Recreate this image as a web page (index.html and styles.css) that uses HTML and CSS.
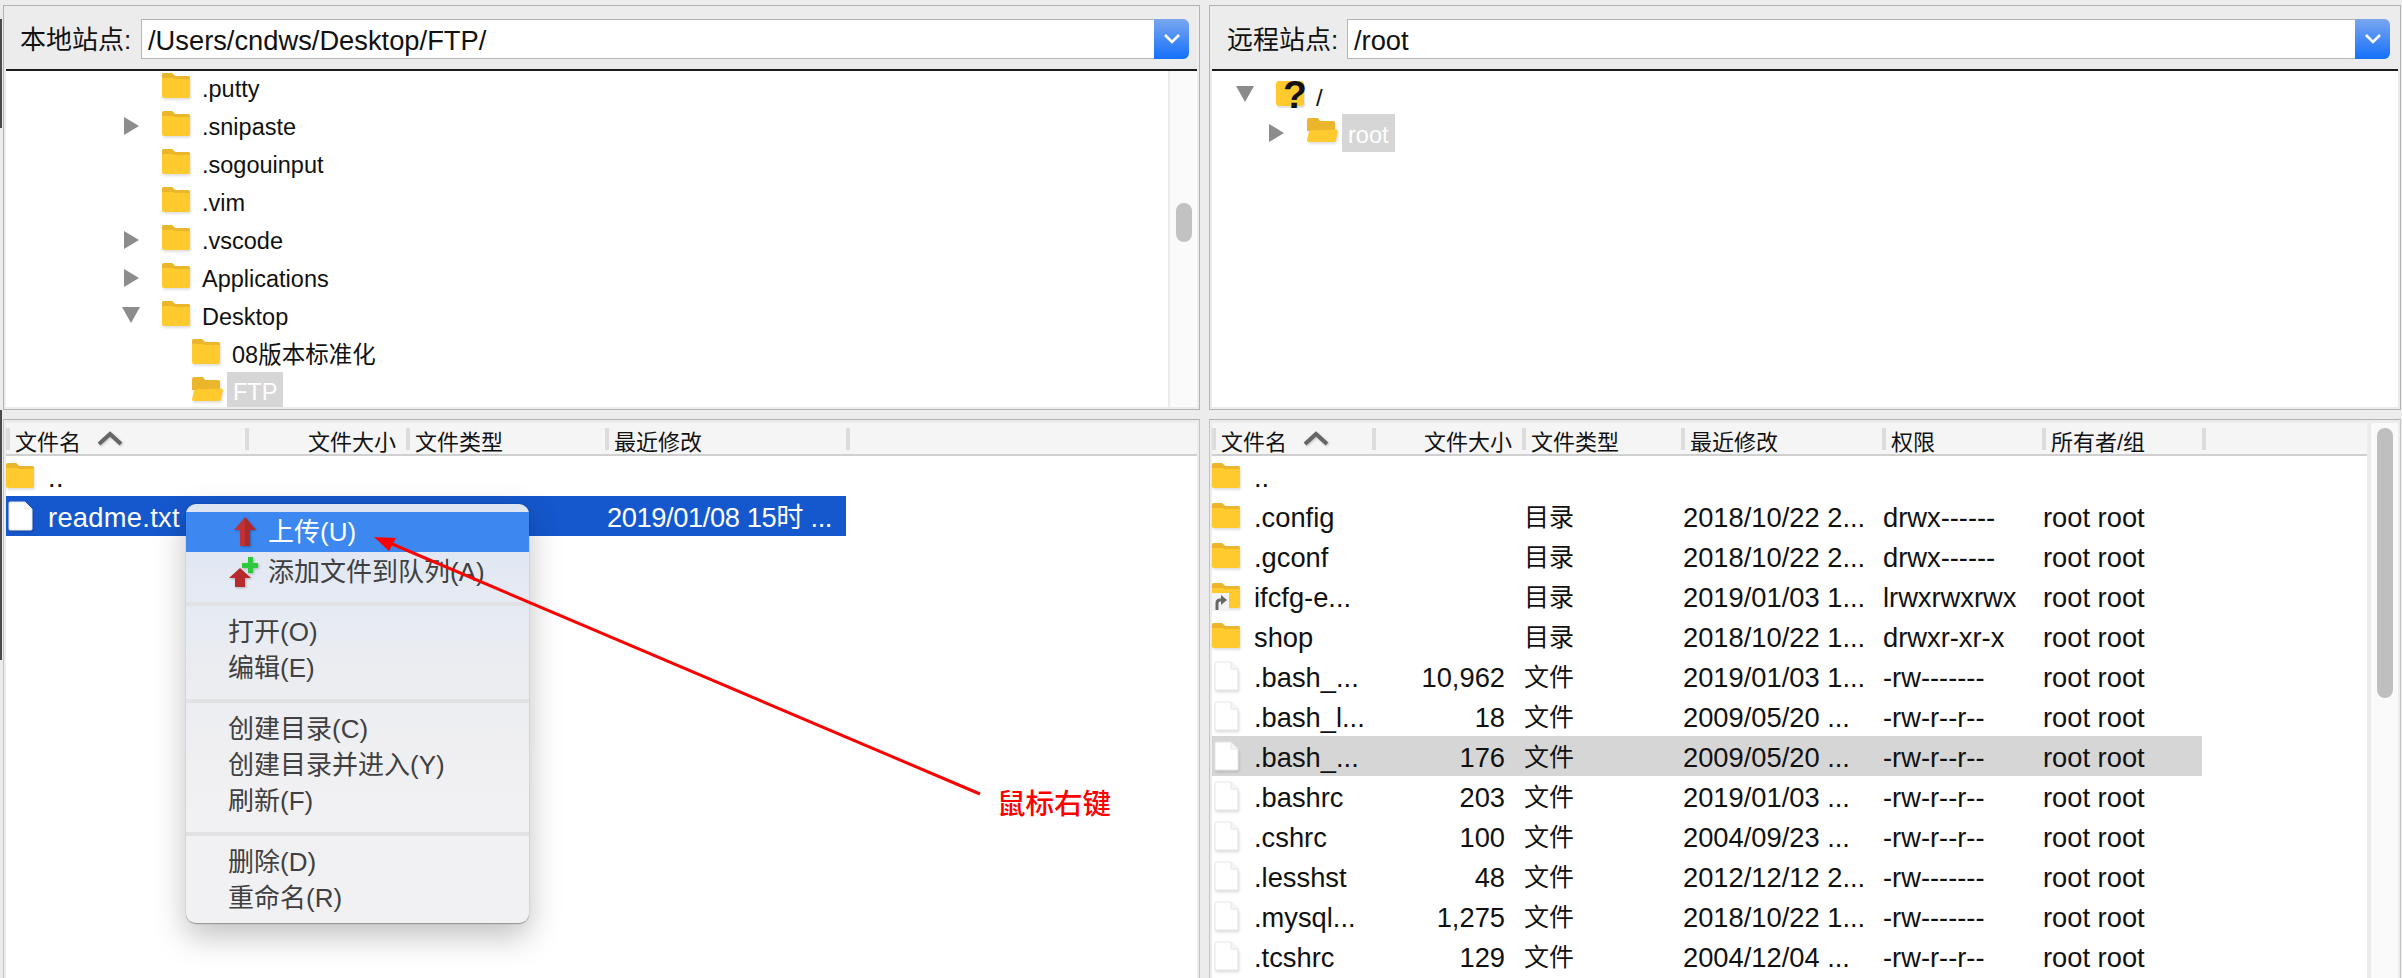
FILE: index.html
```html
<!DOCTYPE html>
<html lang="zh">
<head>
    <meta charset="UTF-8">
    <title>FTP</title>
    <link rel="stylesheet" href="styles.css">
</head>
<body>
    <svg class="icon-defs" width="0" height="0">
        <symbol id="folder" viewBox="0 0 28 25">
            <path d="M0 2a2 2 0 0 1 2-2h8l3 3h13a2 2 0 0 1 2 2v18a2 2 0 0 1-2 2H2a2 2 0 0 1-2-2z" fill="#ffca2e"/>
            <path d="M0 2a2 2 0 0 1 2-2h8l3 3h13a2 2 0 0 1 2 2v1H13l-2-1H0z" fill="#ebb52c"/>
        </symbol>
        <symbol id="folder-open" viewBox="0 0 31 25">
            <path d="M0 2a2 2 0 0 1 2-2h9l2 3h13a2 2 0 0 1 2 2v8H0z" fill="#ebb52c"/>
            <path d="M2 14q.2-1.500 2-1.500l25-1q2 0 2 1.500l-2 9q-.3 2-2 2H2q-2 0-2-2z" fill="#ffca2e"/>
        </symbol>
        <symbol id="file" viewBox="0 0 28 30">
            <path d="M4 1h15l7 7v20q0 1-1 1H4q-1 0-1-1V2q0-1 1-1z" fill="#fff" stroke="#e6e6e6"/>
            <path d="M19 1v7h7" fill="#f6f6f6" stroke="#e6e6e6"/>
        </symbol>
    </svg>

    <main class="app">
        <section class="pane pane-left">
            <div class="site-panel">
                <div class="site-bar">
                    <span class="site-label">本地站点:</span>
                    <div class="site-select">
                        <span class="site-path">/Users/cndws/Desktop/FTP/</span>
                        <span class="site-btn"><svg width="18" height="12" viewBox="0 0 18 12"><path d="M2 2l7 7 7-7" fill="none" stroke="#fff" stroke-width="2.600"/></svg></span>
                    </div>
                </div>
                <div class="tree-wrap">
                    <div class="tree">
                        <div class="tree-row depth-3"><i class="twist"></i><svg class="ico"><use href="#folder"/></svg><span class="tree-name">.putty</span></div>
                        <div class="tree-row depth-3"><i class="twist closed"></i><svg class="ico"><use href="#folder"/></svg><span class="tree-name">.snipaste</span></div>
                        <div class="tree-row depth-3"><i class="twist"></i><svg class="ico"><use href="#folder"/></svg><span class="tree-name">.sogouinput</span></div>
                        <div class="tree-row depth-3"><i class="twist"></i><svg class="ico"><use href="#folder"/></svg><span class="tree-name">.vim</span></div>
                        <div class="tree-row depth-3"><i class="twist closed"></i><svg class="ico"><use href="#folder"/></svg><span class="tree-name">.vscode</span></div>
                        <div class="tree-row depth-3"><i class="twist closed"></i><svg class="ico"><use href="#folder"/></svg><span class="tree-name">Applications</span></div>
                        <div class="tree-row depth-3"><i class="twist open"></i><svg class="ico"><use href="#folder"/></svg><span class="tree-name">Desktop</span></div>
                        <div class="tree-row depth-4"><i class="twist"></i><svg class="ico"><use href="#folder"/></svg><span class="tree-name">08版本标准化</span></div>
                        <div class="tree-row depth-4"><i class="twist"></i><svg class="ico ico-open"><use href="#folder-open"/></svg><span class="tree-name current">FTP</span></div>
                    </div>
                    <div class="tree-scroll"><div class="tree-thumb"></div></div>
                </div>
            </div>

            <div class="list-panel">
                <div class="list-main">
                    <div class="list-head cols-left">
                        <div class="head-cell">文件名<svg class="sort-caret" width="26" height="15" viewBox="0 0 26 15"><path d="M2 13L13 3l11 10" fill="none" stroke="#666" stroke-width="4"/></svg></div>
                        <div class="head-cell head-size">文件大小</div>
                        <div class="head-cell">文件类型</div>
                        <div class="head-cell">最近修改</div>
                        <div class="head-cell"></div>
                    </div>
                    <div class="list-row cols-left">
                        <div class="cell-name"><svg class="ico"><use href="#folder"/></svg><span>..</span></div>
                    </div>
                    <div class="list-row cols-left selected">
                        <div class="cell-name"><svg class="ico ico-file"><use href="#file"/></svg><span>readme.txt</span></div>
                        <div></div>
                        <div></div>
                        <div class="cell-date">2019/01/08 15时 ...</div>
                    </div>
                </div>
            </div>
        </section>

        <section class="pane pane-right">
            <div class="site-panel">
                <div class="site-bar">
                    <span class="site-label">远程站点:</span>
                    <div class="site-select">
                        <span class="site-path">/root</span>
                        <span class="site-btn"><svg width="18" height="12" viewBox="0 0 18 12"><path d="M2 2l7 7 7-7" fill="none" stroke="#fff" stroke-width="2.600"/></svg></span>
                    </div>
                </div>
                <div class="tree-wrap">
                    <div class="tree tree-remote">
                        <div class="tree-row depth-0"><i class="twist open"></i>
                            <span class="ico-unknown"><b>?</b></span>
                            <span class="tree-name">/</span></div>
                        <div class="tree-row depth-1"><i class="twist closed"></i><svg class="ico ico-open"><use href="#folder-open"/></svg><span class="tree-name current">root</span></div>
                    </div>
                </div>
            </div>

            <div class="list-panel">
                <div class="list-main">
                    <div class="list-head cols-right">
                        <div class="head-cell">文件名<svg class="sort-caret" width="26" height="15" viewBox="0 0 26 15"><path d="M2 13L13 3l11 10" fill="none" stroke="#666" stroke-width="4"/></svg></div>
                        <div class="head-cell head-size">文件大小</div>
                        <div class="head-cell">文件类型</div>
                        <div class="head-cell">最近修改</div>
                        <div class="head-cell">权限</div>
                        <div class="head-cell">所有者/组</div>
                        <div class="head-cell"></div>
                    </div>
                    <div class="list-row cols-right">
                        <div class="cell-name"><svg class="ico"><use href="#folder"/></svg><span>..</span></div>
                    </div>
                    <div class="list-row cols-right">
                        <div class="cell-name"><svg class="ico"><use href="#folder"/></svg><span>.config</span></div>
                        <div class="cell-size"></div><div class="cell-type">目录</div><div class="cell-date">2018/10/22 2...</div><div class="cell-perm">drwx------</div><div class="cell-owner">root root</div>
                    </div>
                    <div class="list-row cols-right">
                        <div class="cell-name"><svg class="ico"><use href="#folder"/></svg><span>.gconf</span></div>
                        <div class="cell-size"></div><div class="cell-type">目录</div><div class="cell-date">2018/10/22 2...</div><div class="cell-perm">drwx------</div><div class="cell-owner">root root</div>
                    </div>
                    <div class="list-row cols-right">
                        <div class="cell-name"><span class="ico-link"><svg class="ico"><use href="#folder"/></svg><b><svg width="14" height="16" viewBox="0 0 14 16"><path d="M3 16V9q0-3 3-3h2" fill="none" stroke="#666" stroke-width="3"/><path d="M7 1l6 5-6 5z" fill="#666"/></svg></b></span><span>ifcfg-e...</span></div>
                        <div class="cell-size"></div><div class="cell-type">目录</div><div class="cell-date">2019/01/03 1...</div><div class="cell-perm">lrwxrwxrwx</div><div class="cell-owner">root root</div>
                    </div>
                    <div class="list-row cols-right">
                        <div class="cell-name"><svg class="ico"><use href="#folder"/></svg><span>shop</span></div>
                        <div class="cell-size"></div><div class="cell-type">目录</div><div class="cell-date">2018/10/22 1...</div><div class="cell-perm">drwxr-xr-x</div><div class="cell-owner">root root</div>
                    </div>
                    <div class="list-row cols-right">
                        <div class="cell-name"><svg class="ico ico-file"><use href="#file"/></svg><span>.bash_...</span></div>
                        <div class="cell-size">10,962</div><div class="cell-type">文件</div><div class="cell-date">2019/01/03 1...</div><div class="cell-perm">-rw-------</div><div class="cell-owner">root root</div>
                    </div>
                    <div class="list-row cols-right">
                        <div class="cell-name"><svg class="ico ico-file"><use href="#file"/></svg><span>.bash_l...</span></div>
                        <div class="cell-size">18</div><div class="cell-type">文件</div><div class="cell-date">2009/05/20 ...</div><div class="cell-perm">-rw-r--r--</div><div class="cell-owner">root root</div>
                    </div>
                    <div class="list-row cols-right inactive">
                        <div class="cell-name"><svg class="ico ico-file"><use href="#file"/></svg><span>.bash_...</span></div>
                        <div class="cell-size">176</div><div class="cell-type">文件</div><div class="cell-date">2009/05/20 ...</div><div class="cell-perm">-rw-r--r--</div><div class="cell-owner">root root</div>
                    </div>
                    <div class="list-row cols-right">
                        <div class="cell-name"><svg class="ico ico-file"><use href="#file"/></svg><span>.bashrc</span></div>
                        <div class="cell-size">203</div><div class="cell-type">文件</div><div class="cell-date">2019/01/03 ...</div><div class="cell-perm">-rw-r--r--</div><div class="cell-owner">root root</div>
                    </div>
                    <div class="list-row cols-right">
                        <div class="cell-name"><svg class="ico ico-file"><use href="#file"/></svg><span>.cshrc</span></div>
                        <div class="cell-size">100</div><div class="cell-type">文件</div><div class="cell-date">2004/09/23 ...</div><div class="cell-perm">-rw-r--r--</div><div class="cell-owner">root root</div>
                    </div>
                    <div class="list-row cols-right">
                        <div class="cell-name"><svg class="ico ico-file"><use href="#file"/></svg><span>.lesshst</span></div>
                        <div class="cell-size">48</div><div class="cell-type">文件</div><div class="cell-date">2012/12/12 2...</div><div class="cell-perm">-rw-------</div><div class="cell-owner">root root</div>
                    </div>
                    <div class="list-row cols-right">
                        <div class="cell-name"><svg class="ico ico-file"><use href="#file"/></svg><span>.mysql...</span></div>
                        <div class="cell-size">1,275</div><div class="cell-type">文件</div><div class="cell-date">2018/10/22 1...</div><div class="cell-perm">-rw-------</div><div class="cell-owner">root root</div>
                    </div>
                    <div class="list-row cols-right">
                        <div class="cell-name"><svg class="ico ico-file"><use href="#file"/></svg><span>.tcshrc</span></div>
                        <div class="cell-size">129</div><div class="cell-type">文件</div><div class="cell-date">2004/12/04 ...</div><div class="cell-perm">-rw-r--r--</div><div class="cell-owner">root root</div>
                    </div>
                </div>
                <div class="list-scroll"><div class="list-thumb"></div></div>
            </div>
        </section>
    </main>

    <!-- 右键菜单 -->
    <div class="context-menu">
        <div class="menu-item active">
            <svg class="menu-ico" width="24" height="30" viewBox="0 0 24 30"><path d="M12 0l11 13h-6v16H7V13H1z" fill="#c13236"/><path d="M12 0l11 13h-6v16h-5z" fill="#96201f" opacity=".45"/></svg>
            上传(U)
        </div>
        <div class="menu-item">
            <svg class="menu-ico" width="32" height="30" viewBox="0 0 32 30"><path d="M11 11l11 10h-6v9H6v-9H0z" fill="#b72a2e"/><path d="M19 0h5v6h5v5h-5v5h-5v-5h-6V6h6z" fill="#2fc93f"/></svg>
            添加文件到队列(A)
        </div>
        <div class="menu-sep first"></div>
        <div class="menu-item plain">打开(O)</div>
        <div class="menu-item plain">编辑(E)</div>
        <div class="menu-sep"></div>
        <div class="menu-item plain">创建目录(C)</div>
        <div class="menu-item plain">创建目录并进入(Y)</div>
        <div class="menu-item plain">刷新(F)</div>
        <div class="menu-sep"></div>
        <div class="menu-item plain">删除(D)</div>
        <div class="menu-item plain">重命名(R)</div>
    </div>

    <!-- 标注 -->
    <svg class="note-arrow" width="2402" height="978" viewBox="0 0 2402 978">
        <path d="M980 794L385 541" stroke="#f00" stroke-width="3" fill="none"/>
        <path d="M374 537l22 1-7 13z" fill="#f00"/>
    </svg>
    <div class="note-label">鼠标右键</div>
</body>
</html>
```

FILE: styles.css
```css
* {
    box-sizing: border-box;
}

html, body {
    margin: 0;
    height: 978px;
    overflow: hidden;
}

body {
    background-color: #ececec;
    background-image: linear-gradient(#4a4a4a, #4a4a4a), linear-gradient(#4a4a4a, #4a4a4a);
    background-repeat: no-repeat;
    background-position: 0 19px, 0 410px;
    background-size: 2px 109px, 2px 250px;
    font-family: "Liberation Sans", "Noto Sans CJK SC", sans-serif;
    font-size: 27.300px;
    color: #111;
    position: relative;
}

.icon-defs {
    position: absolute;
}

.app {
    display: flex;
    height: 978px;
    padding: 5px 1px 0 3px;
    gap: 9px;
}

.pane {
    display: flex;
    flex-direction: column;
    gap: 9px;
}

.pane-left {
    width: 1197px;
}

.pane-right {
    width: 1192px;
}

/* 站点栏 */
.site-panel {
    height: 405px;
    border: 1px solid #b2b2b2;
    display: flex;
    flex-direction: column;
    padding: 0 2px 2px;
    flex: none;
}

.site-bar {
    height: 65px;
    padding-top: 13px;
    display: flex;
    align-items: flex-start;
    flex: none;
    border-bottom: 2px solid #1c1c1c;
}

.site-label {
    font-size: 26px;
    line-height: 42px;
    margin-left: 14px;
    width: 121px;
    flex: none;
}

.pane-right .site-label {
    margin-left: 15px;
    width: 120px;
}

.site-select {
    flex: 1;
    height: 40px;
    margin-right: 8px;
    background: #fff;
    border: 1px solid #b5b5b5;
    border-right: none;
    border-radius: 0 6px 6px 0;
    display: flex;
    justify-content: space-between;
}

.site-path {
    font-size: 27.300px;
    line-height: 41px;
    padding-left: 6px;
}

.site-btn {
    width: 35px;
    margin: -1px 0;
    background: linear-gradient(#7aa7ef, #1570fb);
    border-radius: 0 6px 6px 0;
    display: flex;
    align-items: center;
    justify-content: center;
}

/* 目录树 */
.tree-wrap {
    flex: 1;
    min-height: 0;
    display: flex;
    background: #fff;
    overflow: hidden;
}

.tree {
    flex: 1;
    padding-top: 2px;
}

.tree-remote {
    padding-top: 9px;
}

.tree-row {
    height: 38px;
    display: flex;
    align-items: flex-start;
    font-size: 23.500px;
}

.depth-0 { padding-left: 26px; }
.depth-1 { padding-left: 57px; }
.depth-3 { padding-left: 118px; }
.depth-4 { padding-left: 148px; }

.twist {
    width: 38px;
    flex: none;
    display: block;
    padding-top: 6px;
}

.twist.closed::before {
    content: "";
    display: block;
    width: 0;
    border-left: 15px solid #8c8c8c;
    border-top: 9px solid transparent;
    border-bottom: 9px solid transparent;
}

.twist.open::before {
    content: "";
    display: block;
    width: 0;
    margin-left: -2px;
    border-top: 16px solid #8c8c8c;
    border-left: 9px solid transparent;
    border-right: 9px solid transparent;
}

.ico {
    width: 28px;
    height: 25px;
    flex: none;
    display: block;
    filter: drop-shadow(1px 2px 1px rgba(0, 0, 0, 0.12));
}

.ico-open {
    width: 31px;
}

.ico-file {
    height: 30px;
    margin-top: -3px;
}

.tree-name {
    margin-left: 12px;
    line-height: 32px;
}

.tree-name.current {
    margin: -5px 0 0 4px;
    padding: 0 6px;
    height: 36px;
    line-height: 41px;
    color: #fff;
    background: #d6d6d6;
}

.tree-remote .tree-name.current {
    margin-top: -4px;
    height: 38px;
    line-height: 43px;
}

.ico-unknown {
    position: relative;
    width: 28px;
    height: 25px;
    margin-top: 1px;
    border-radius: 3px;
    background: #ffca2e;
    box-shadow: 1px 2px 1px rgba(0, 0, 0, 0.12);
    flex: none;
}

.ico-unknown b {
    position: absolute;
    left: 7px;
    top: -4px;
    font-size: 39px;
    font-weight: 700;
    line-height: 36px;
    color: #111;
}

.tree-remote .tree-row:first-child .tree-name {
    margin-top: 2px;
    font-size: 24px;
}

.tree-scroll {
    width: 29px;
    flex: none;
    background: #fafafa;
    border-left: 2px solid #ebebeb;
    padding: 132px 0 0 6px;
}

.tree-thumb {
    width: 16px;
    height: 39px;
    border-radius: 8px;
    background: #c2c2c2;
}

/* 文件列表 */
.list-panel {
    flex: 1;
    min-height: 0;
    border-top: 1px solid #b2b2b2;
    border-left: 1px solid #c4c4c4;
    border-right: 1px solid #c4c4c4;
    padding: 3px 2px 0;
    display: flex;
}

.list-main {
    flex: 1;
    min-width: 0;
    background: #fff;
}

.list-head {
    height: 33px;
    background: #f5f5f5;
    border-bottom: 2px solid #d0d0d0;
    font-size: 22px;
}

.cols-left {
    display: grid;
    grid-template-columns: 239px 161px 199px 241px;
    grid-template-rows: 40px;
    width: 840px;
}

.cols-right {
    display: grid;
    grid-template-columns: 160px 150px 159px 201px 160px 160px;
    grid-template-rows: 40px;
    width: 990px;
}

.list-head.cols-left {
    grid-template-columns: 239px 161px 199px 241px 1fr;
    grid-template-rows: 31px;
    width: auto;
}

.list-head.cols-right {
    grid-template-columns: 160px 150px 159px 201px 160px 160px 165px;
    grid-template-rows: 31px;
    width: auto;
}

.head-cell {
    padding: 3px 0 0 9px;
    white-space: nowrap;
    display: flex;
    align-items: center;
    background: linear-gradient(#dcdcdc, #dcdcdc) no-repeat 0 center / 4px 22px;
}

.sort-caret {
    margin-left: 16px;
    margin-top: -4px;
    filter: drop-shadow(1px 1px 1px rgba(0, 0, 0, 0.2));
}

.head-size {
    justify-content: flex-end;
    padding: 3px 10px 0 0;
}

.list-row {
    height: 40px;
    line-height: 43px;
    white-space: nowrap;
}

.list-row .ico {
    margin-top: 7px;
}

.list-row .ico-file {
    margin-top: 5px;
}

.cell-name {
    display: flex;
    gap: 14px;
}

.cell-size {
    text-align: right;
    padding-right: 17px;
}

.cell-type {
    font-size: 25px;
    padding-left: 2px;
}

.cell-date {
    padding-left: 2px;
}

.cols-left .cell-date {
    letter-spacing: -0.400px;
}

.cell-perm, .cell-owner {
    padding-left: 1px;
}

.cols-left .cell-name span {
    letter-spacing: 0.300px;
}

.selected {
    background: #1557cc;
    color: #fff;
}

.inactive {
    background: #d6d6d6;
}

.ico-link {
    position: relative;
    flex: none;
    width: 28px;
}

.ico-link b {
    position: absolute;
    left: 0;
    top: 17px;
    width: 17px;
    height: 18px;
    background: #f4f4f4;
    line-height: 0;
    padding: 1px 0 0 2px;
}

.list-scroll {
    width: 29px;
    flex: none;
    margin-left: 2px;
    background: #fafafa;
    border-left: 2px solid #ebebeb;
    padding: 5px 0 0 6px;
}

.list-thumb {
    width: 16px;
    height: 270px;
    border-radius: 8px;
    background: #bfbfbf;
}

/* 右键菜单 */
.context-menu {
    position: absolute;
    left: 186px;
    top: 504px;
    width: 343px;
    height: 420px;
    padding-top: 8px;
    border-radius: 10px;
    background: linear-gradient(#dde5f2 0, #e5eaf3 90px, #ecedf1 180px, #f1f1f3 300px);
    box-shadow: 0 12px 32px rgba(0, 0, 0, 0.25), 0 0 1px rgba(0, 0, 0, 0.5);
    border-bottom: 1px solid #9a9a9a;
    font-size: 26px;
    color: #404040;
}

.menu-item {
    height: 40px;
    line-height: 40px;
    padding-left: 82px;
    position: relative;
}

.menu-item.plain {
    height: 36px;
    line-height: 31px;
    padding-left: 42px;
}

.menu-item.active {
    background: #3d87f0;
    color: #fff;
}

.menu-ico {
    position: absolute;
    left: 47px;
    top: 5px;
    filter: drop-shadow(1px 1px 1px rgba(0, 0, 0, 0.25));
}

.menu-item:nth-child(2) .menu-ico {
    left: 43px;
    top: 5px;
}

.menu-sep {
    height: 4px;
    margin: 10px 0 11px;
    background: #e1e2e4;
}

/* 标注 */
.note-arrow {
    position: absolute;
    left: 0;
    top: 0;
    pointer-events: none;
}

.note-label {
    position: absolute;
    left: 997px;
    top: 786px;
    font-size: 28.500px;
    font-weight: 500;
    line-height: 36px;
    color: #f00;
}
```
